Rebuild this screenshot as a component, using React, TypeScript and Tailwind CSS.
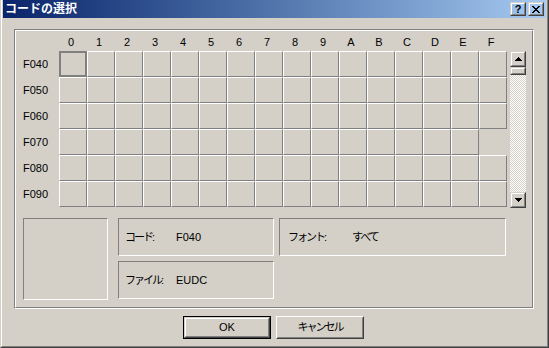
import React from "react";

const hex = ["0", "1", "2", "3", "4", "5", "6", "7", "8", "9", "A", "B", "C", "D", "E", "F"];
const rows = ["F040", "F050", "F060", "F070", "F080", "F090"];

function Raised({ className = "", children }: { className?: string; children?: React.ReactNode }) {
  return (
    <div className={`border border-t-[#d4d0c8] border-l-[#d4d0c8] border-r-[#404040] border-b-[#404040] ${className}`}>
      <div className="w-full h-full border border-t-white border-l-white border-r-[#808080] border-b-[#808080] flex items-center justify-center">
        {children}
      </div>
    </div>
  );
}

function Cell({ r, c }: { r: number; c: number }) {
  if (r === 0 && c === 0) return <div className="w-[28px] h-[26px] border-2 border-[#808080]" />;
  if (r === 3 && c === 15) return <div className="w-[28px] h-[26px]" />;
  return (
    <div className="w-[28px] h-[26px] border border-t-white border-l-white border-r-[#808080] border-b-[#808080]" />
  );
}

function UpArrow() {
  return (
    <svg width="7" height="4" viewBox="0 0 7 4" shapeRendering="crispEdges">
      <path d="M3 0h1v1H3zM2 1h3v1H2zM1 2h5v1H1zM0 3h7v1H0z" fill="#000" />
    </svg>
  );
}

function DownArrow() {
  return (
    <svg width="7" height="4" viewBox="0 0 7 4" shapeRendering="crispEdges">
      <path d="M0 0h7v1H0zM1 1h5v1H1zM2 2h3v1H2zM3 3h1v1H3z" fill="#000" />
    </svg>
  );
}

function Sunken({ className = "", children }: { className?: string; children?: React.ReactNode }) {
  return (
    <div className={`border border-t-[#808080] border-l-[#808080] border-r-white border-b-white ${className}`}>
      {children}
    </div>
  );
}

export default function App() {
  return (
    <div
      className="w-[549px] h-[348px] bg-[#d4d0c8] border-l border-r border-b border-l-[#d4d0c8] border-r-[#404040] border-b-[#404040] overflow-hidden text-[11px] text-black"
      style={{ fontFamily: '"Liberation Sans", "Noto Sans CJK JP", sans-serif' }}
    >
      <div className="h-full border-l border-r border-b border-l-white border-r-[#808080] border-b-[#808080] px-px flex flex-col">
        {/* Title bar */}
        <div className="h-[18px] shrink-0 bg-gradient-to-r from-[#0a246a] to-[#a6caf0] flex items-center pl-[2px] pr-[2px]">
          <div className="flex-1 text-white font-bold text-[12px] leading-none">コードの選択</div>
          <Raised className="w-[16px] h-[14px]">
            <span className="font-bold text-[11px] leading-none mt-[1px]">?</span>
          </Raised>
          <Raised className="w-[16px] h-[14px] ml-[2px]">
            <svg width="8" height="7" viewBox="0 0 8 7" shapeRendering="crispEdges">
              <path
                d="M0 0h2v1H0zM6 0h2v1H6zM1 1h2v1H1zM5 1h2v1H5zM2 2h4v1H2zM3 3h2v1H3zM2 4h4v1H2zM1 5h2v1H1zM5 5h2v1H5zM0 6h2v1H0zM6 6h2v1H6z"
                fill="#000"
              />
            </svg>
          </Raised>
        </div>

        {/* Frame */}
        <div className="ml-[11px] mt-[11px] w-[520px] h-[280px] border border-t-[#808080] border-l-[#808080] border-r-white border-b-white">
          <div className="w-full h-full border border-t-white border-l-white border-r-[#808080] border-b-[#808080] flex flex-col">
            {/* Column headers */}
            <div className="h-[20px] pt-[5px] pl-[43px] flex">
              {hex.map((h) => (
                <div key={h} className="w-[28px] text-center pr-[4px] leading-[13px]">
                  {h}
                </div>
              ))}
            </div>
            {/* Grid */}
            <div className="h-[156px] flex items-start">
              <div className="w-[43px] flex flex-col">
                {rows.map((r) => (
                  <div key={r} className="h-[26px] flex items-center pl-[7px] leading-[13px]">
                    {r}
                  </div>
                ))}
              </div>
              <div className="grid grid-cols-[repeat(16,28px)]">
                {rows.map((_, r) => hex.map((__, c) => <Cell key={`${r}-${c}`} r={r} c={c} />))}
              </div>
              <div className="ml-[3px] w-[16px] h-[157px] flex flex-col">
                <Raised className="w-[16px] h-[16px] shrink-0">
                  <UpArrow />
                </Raised>
                <Raised className="w-[16px] h-[8px] shrink-0" />
                <div className="flex-1 [background:repeating-conic-gradient(#d4d0c8_0_25%,#ffffff_0_50%)_0_0/2px_2px]" />
                <Raised className="w-[16px] h-[16px] shrink-0">
                  <DownArrow />
                </Raised>
              </div>
            </div>
            {/* Bottom info */}
            <div className="mt-[11px] pl-[7px] flex items-start">
              <Sunken className="w-[85px] h-[82px]" />
              <div className="ml-[10px] flex flex-col">
                <Sunken className="w-[156px] h-[38px] flex items-center pl-[6px]">
                  <div className="w-[51px]">
                    <span className="tracking-[-2px]">コード</span>:
                  </div>
                  <div>F040</div>
                </Sunken>
                <Sunken className="mt-[5px] w-[156px] h-[38px] flex items-center pl-[6px]">
                  <div className="w-[51px]">
                    <span className="tracking-[-2px]">ファイル</span>:
                  </div>
                  <div>EUDC</div>
                </Sunken>
              </div>
              <Sunken className="ml-[5px] w-[227px] h-[38px] flex items-center pl-[8px]">
                <div className="w-[64px]">
                  <span className="tracking-[-2px]">フォント</span>:
                </div>
                <div className="tracking-[-2px]">すべて</div>
              </Sunken>
            </div>
          </div>
        </div>

        {/* Buttons */}
        <div className="mt-[7px] ml-[180px] flex">
          <div className="w-[88px] h-[23px] border border-black">
            <Raised className="w-full h-full">
              <span>OK</span>
            </Raised>
          </div>
          <div className="ml-[5px] w-[88px] h-[23px] border border-t-white border-l-white border-r-[#404040] border-b-[#404040]">
            <div className="w-full h-full border border-t-[#d4d0c8] border-l-[#d4d0c8] border-r-[#808080] border-b-[#808080] flex items-center justify-center">
              <span className="tracking-[-2px]">キャンセル</span>
            </div>
          </div>
        </div>
      </div>
    </div>
  );
}
